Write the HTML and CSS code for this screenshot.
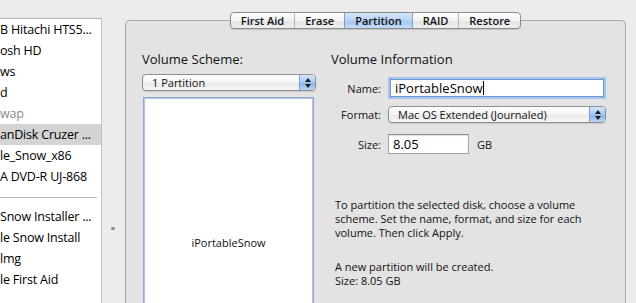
FILE: index.html
```html
<!DOCTYPE html>
<html>
<head>
<meta charset="utf-8">
<link rel="stylesheet" href="styles.css">
</head>
<body>
<div class="window">
  <div class="sidebar">
    <ul class="disks">
      <li class="row">B Hitachi HTS5...</li>
      <li class="row">osh HD</li>
      <li class="row">ws</li>
      <li class="row">d</li>
      <li class="row dim">wap</li>
      <li class="row selected">anDisk Cruzer ...</li>
      <li class="row">le_Snow_x86</li>
      <li class="row">A DVD-R UJ-868</li>
      <li class="sep"></li>
      <li class="row">Snow Installer ...</li>
      <li class="row">le Snow Install</li>
      <li class="row">lmg</li>
      <li class="row">le First Aid</li>
    </ul>
  </div>
  <div class="splitter"><span class="dimple"></span></div>
  <div class="main">
    <div class="tabs">
      <span class="tab">First Aid</span>
      <span class="tab">Erase</span>
      <span class="tab active">Partition</span>
      <span class="tab">RAID</span>
      <span class="tab">Restore</span>
    </div>
    <div class="panel">
      <div class="scheme">
        <h2 class="heading">Volume Scheme:</h2>
        <div class="popup scheme-popup">
          <span class="popup-label">1 Partition</span>
          <span class="popup-arrows"><span class="up"></span><span class="down"></span></span>
        </div>
        <div class="layout"><span class="layout-name">iPortableSnow</span></div>
      </div>
      <div class="info">
        <h2 class="heading">Volume Information</h2>
        <div class="field-row name-row">
          <label class="label">Name:</label>
          <div class="textfield focused">iPortableSnow<span class="caret"></span></div>
        </div>
        <div class="field-row format-row">
          <label class="label">Format:</label>
          <div class="popup format-popup">
            <span class="popup-label">Mac OS Extended (Journaled)</span>
            <span class="popup-arrows"><span class="up"></span><span class="down"></span></span>
          </div>
        </div>
        <div class="field-row size-row">
          <label class="label">Size:</label>
          <div class="textfield size-field">8.05</div>
          <span class="unit">GB</span>
        </div>
        <p class="desc">To partition the selected disk, choose a volume scheme. Set the name, format, and size for each volume. Then click Apply.</p>
        <p class="desc result">A new partition will be created.<br>Size: 8.05 GB</p>
      </div>
    </div>
  </div>
</div>
</body>
</html>
```
FILE: styles.css
```css
* { box-sizing: border-box; }
html, body { margin: 0; padding: 0; }
body {
  width: 636px;
  height: 303px;
  overflow: hidden;
  background: #ececec;
  font-family: "Open Sans", "DejaVu Sans", sans-serif;
  color: #000;
}
.window {
  display: flex;
  height: 303px;
}
.sidebar {
  width: 102px;
  height: 285px;
  flex: none;
  margin-top: 18px;
  background: #fff;
  border-top: 1px solid #b4b4b4;
  border-right: 1px solid #c2c2c2;
  overflow: hidden;
}
.disks {
  list-style: none;
  margin: 0;
  padding: 0;
}
.row {
  height: 21px;
  padding: 1px 0 0 0;
  font-size: 12.5px;
  line-height: 19px;
  letter-spacing: -0.2px;
  white-space: nowrap;
  overflow: hidden;
}
.row.dim { color: #8a8a8a; }
.row.selected { background: #d4d4d4; }
.sep {
  height: 19px;
  padding-top: 10px;
}
.sep::before {
  content: "";
  display: block;
  width: 97px;
  border-top: 1px solid #b8b8b8;
}
.splitter {
  width: 23px;
  flex: none;
  padding: 227px 0 0 9px;
}
.dimple {
  display: block;
  width: 4px;
  height: 3px;
  border-radius: 2px;
  background: #8a8a8a;
}
.main {
  width: 501px;
  flex: none;
  padding-top: 12px;
}
.tabs {
  position: relative;
  z-index: 1;
  display: flex;
  width: max-content;
  height: 17px;
  margin: 0 auto -9px;
  border: 1px solid #8c8c8c;
  border-radius: 4px;
  overflow: hidden;
  background: linear-gradient(#ffffff, #f2f2f2 50%, #e4e4e4 51%, #eeeeee);
  box-shadow: 0 1px 1px rgba(0,0,0,0.15);
}
.tab {
  padding: 0 10px;
  font-size: 11px;
  line-height: 15px;
  font-weight: 600;
  color: #111;
  border-left: 1px solid #b4b4b4;
}
.tab:first-child { border-left: none; }
.tab.active {
  background: linear-gradient(#d6e6fa, #b9d3f4 50%, #a4c5ef 51%, #c2dbf8);
  border-left-color: #7f9fc9;
}
.tab.active + .tab { border-left-color: #7f9fc9; }
.panel {
  display: flex;
  gap: 15px;
  height: 283px;
  padding: 30px 19px 0 16px;
  background: #e3e3e3;
  border: 1px solid #a9a9a9;
  border-bottom: none;
  border-radius: 5px 5px 0 0;
}
.heading {
  margin: 0;
  font-size: 13px;
  line-height: 16px;
  font-weight: normal;
  color: #111;
}
.scheme {
  width: 174px;
  flex: none;
}
.popup {
  display: flex;
  height: 17px;
  border: 1px solid #8f8f8f;
  border-radius: 4px;
  overflow: hidden;
  background: linear-gradient(#ffffff, #f4f4f4 50%, #e8e8e8 51%, #f6f6f6);
  box-shadow: 0 1px 1px rgba(0,0,0,0.12);
}
.popup-label {
  flex: 1;
  padding-left: 9px;
  font-size: 11px;
  line-height: 15px;
  color: #111;
  white-space: nowrap;
}
.popup-arrows {
  width: 16px;
  flex: none;
  display: flex;
  flex-direction: column;
  align-items: center;
  justify-content: center;
  gap: 2px;
  border-left: 1px solid #7f9ccc;
  background: linear-gradient(#d2e4fa, #a9c9f2 50%, #86b1ea 51%, #b7d5f8);
}
.up, .down {
  width: 0;
  height: 0;
  border-left: 3px solid transparent;
  border-right: 3px solid transparent;
}
.up { border-bottom: 4px solid #1a1a1a; }
.down { border-top: 4px solid #1a1a1a; }
.scheme-popup { margin-top: 7px; }
.layout {
  display: flex;
  justify-content: center;
  height: 206px;
  margin: 6px 2px 0 1px;
  padding-top: 138px;
  background: #fff;
  border: 1px solid #9aa7b8;
  border-bottom: none;
  box-shadow: inset 1px 1px 0 0 #a8c6ee, inset -1px 0 0 0 #a8c6ee;
}
.layout-name {
  font-size: 11px;
  line-height: 14px;
  color: #111;
}
.info {
  width: 275px;
  flex: none;
}
.field-row {
  display: flex;
  align-items: center;
  gap: 7px;
}
.label {
  width: 50px;
  flex: none;
  text-align: right;
  font-size: 11px;
  color: #111;
}
.name-row { margin-top: 10px; height: 22px; }
.format-row { margin-top: 7px; height: 17px; }
.size-row { margin-top: 11px; height: 20px; }
.textfield {
  height: 20px;
  padding-left: 4px;
  font-size: 13px;
  line-height: 18px;
  background: #fff;
  border: 1px solid #a4a4a4;
  border-top-color: #8c8c8c;
  box-shadow: inset 0 1px 1px rgba(0,0,0,0.12);
  white-space: nowrap;
}
.textfield.focused {
  width: 214px;
  height: 18px;
  margin-left: 2px;
  line-height: 16px;
  border-color: #6e98d4;
  box-shadow: 0 0 0 2px #a3c2ec;
}
.caret {
  display: inline-block;
  width: 1px;
  height: 14px;
  vertical-align: -2px;
  background: #000;
}
.format-popup { width: 218px; }
.size-field { width: 81px; }
.unit {
  margin-left: 1px;
  font-size: 11px;
  color: #111;
}
.desc {
  margin: 44px 0 0 4px;
  font-size: 11px;
  line-height: 14px;
  color: #111;
}
.desc.result { margin-top: 20px; }
```
